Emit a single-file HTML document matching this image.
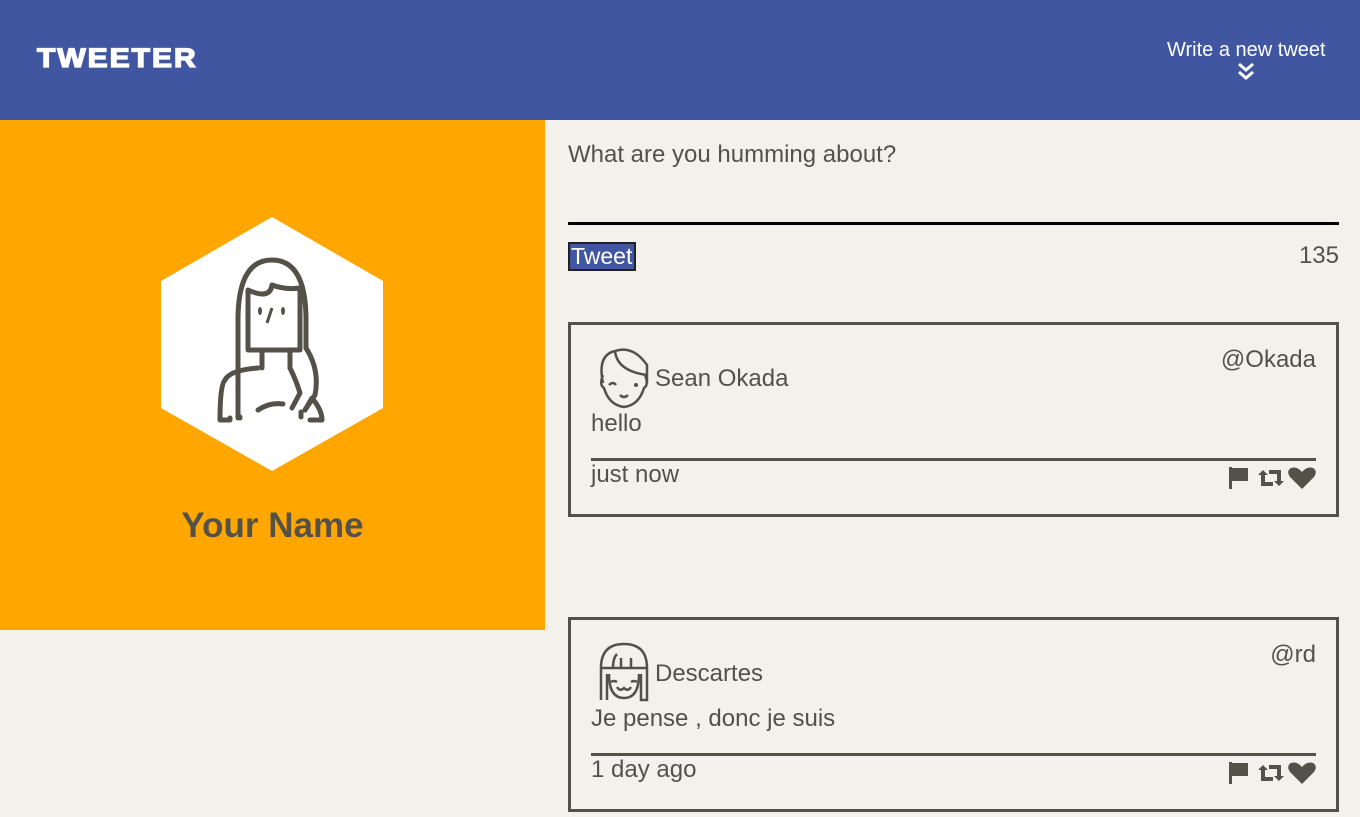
<!DOCTYPE html>
<html><head><style>
*{margin:0;padding:0;box-sizing:border-box}
body{width:1360px;height:817px;overflow:hidden;background:#f4f1ec;font-family:"Liberation Sans",sans-serif;color:#545149;position:relative}
.hdr{position:absolute;left:0;top:0;width:1360px;height:120px;background:#4056a1}
.logo{position:absolute;left:37px;top:42px;color:#fff;font-weight:900;font-size:30px;letter-spacing:2px;-webkit-text-stroke:1.5px #fff;transform:scaleY(.9)}
.wr{position:absolute;left:1167px;top:39px;color:#fff;font-size:20px}
.prof{position:absolute;left:0;top:120px;width:545px;height:510px;background:#ffa700}
.name{position:absolute;left:0;width:545px;top:386px;text-align:center;font-weight:bold;font-size:35px}
.abs{position:absolute}
.box{position:absolute;left:568px;width:771px;height:195px;border:3px solid #545149}
.box .n{position:absolute;left:84px;font-size:24px}
.box .h{position:absolute;right:20px;font-size:24px}
.box .t{position:absolute;left:20px;font-size:24px}
.box .l{position:absolute;left:20px;right:20px;height:3px;background:#545149}
</style></head><body>
<div class="hdr"><div class="logo">TWEETER</div><div class="wr">Write a new tweet</div>
<svg class="abs" style="left:1236px;top:62px" width="20" height="20" viewBox="0 0 20 20"><path d="M3 2l7 6 7-6M3 10l7 6 7-6" fill="none" stroke="#fff" stroke-width="3"/></svg></div>
<div class="prof">
<svg class="abs" style="left:0;top:0" width="545" height="400">
<polygon points="272,97 383,161 383,288 272,351 161,288 161,161" fill="#fff"/>
<g fill="none" stroke="#545149" stroke-width="5" stroke-linejoin="round" stroke-linecap="round">
<path d="M238,298 V200 Q238,140 272,140 Q306,140 306,200 V228 Q320,250 315,275 L305,290"/>
<path d="M248,170 Q270,180 272,165 Q285,170 300,168 V230 H248 Z"/>
<path d="M262,230 V248 M290,230 V248"/>
<path d="M290,248 Q296,260 300,273 L292,288 M258,248 Q230,250 225,260 Q220,265 220,300 H230 V298 M305,290 L312,278 Q322,290 322,300 H310"/>
<path d="M240,298 V297 M258,290 Q270,282 283,284 M301,292 V297"/>
</g>
<ellipse cx="260" cy="191" rx="2" ry="4" fill="#545149"/><ellipse cx="283" cy="191" rx="2" ry="4" fill="#545149"/>
<path d="M272,188 L267,203" stroke="#545149" stroke-width="3"/>
</svg>
<div class="name">Your Name</div></div>
<div class="abs" style="left:568px;top:141px;font-size:24px">What are you humming about?</div>
<div class="abs" style="left:568px;top:222px;width:771px;height:3px;background:#000"></div>
<div class="abs" style="left:568px;top:242px;width:68px;height:29px;background:#4056a1;border:2px solid #222;color:#fff;font-size:23px;line-height:25px;padding-left:1px">Tweet</div>
<div class="abs" style="right:21px;top:242px;font-size:24px">135</div>
<div class="box" style="top:322px">
<svg class="abs" style="left:24px;top:20px" width="58" height="66" viewBox="0 0 58 66"><g fill="none" stroke="#545149" stroke-width="2.5"><path d="M8,38 Q2,10 20,6 Q38,0 52,20 V38"/><path d="M20,6 Q22,26 52,30"/><path d="M8,30 Q4,40 9,43 Q14,60 29,62 Q44,60 49,43 Q54,40 50,30"/><path d="M14,40 Q18,36 21,40 M25,50 Q29,54 33,50"/></g><circle cx="41" cy="40" r="2" fill="#545149"/></svg>
<div class="n" style="top:40px">Sean Okada</div><div class="h" style="top:21px">@Okada</div>
<div class="t" style="top:85px">hello</div><div class="l" style="top:133px"></div>
<div class="t" style="top:136px">just now</div>
<svg class="abs" style="right:18px;top:140px" width="92" height="26" viewBox="0 0 92 26"><g fill="#545149"><path d="M3,2h3v22h-3z M6,3h16v13h-16z"/><path d="M32,10 l5-5 5,5h-3v7h8v4h-12v-11z M58,16 l-5,5 -5-5h3v-7h-8v-4h12v11z"/><path d="M76,24 L64,12 Q60,6 65,3 Q71,1 76,7 Q81,1 87,3 Q92,6 88,12z"/></g></svg>
</div>
<div class="box" style="top:617px">
<svg class="abs" style="left:24px;top:20px" width="58" height="64" viewBox="0 0 58 64"><g fill="none" stroke="#545149" stroke-width="2.5"><path d="M6,60 V28 Q6,4 29,4 Q52,4 52,28 V60 H46 V34 M12,60 V34 M6,28 H52"/><path d="M14,34 Q14,58 29,58 Q44,58 44,34"/><path d="M18,28 Q18,18 22,14 M26,28 V18 M36,28 V18"/><path d="M16,42 Q19,40 22,42 M36,42 Q39,40 42,42 M22,47 Q25,52 29,48 Q33,52 36,47"/></g></svg>
<div class="n" style="top:40px">Descartes</div><div class="h" style="top:21px">@rd</div>
<div class="t" style="top:85px">Je pense , donc je suis</div><div class="l" style="top:133px"></div>
<div class="t" style="top:136px">1 day ago</div>
<svg class="abs" style="right:18px;top:140px" width="92" height="26" viewBox="0 0 92 26"><g fill="#545149"><path d="M3,2h3v22h-3z M6,3h16v13h-16z"/><path d="M32,10 l5-5 5,5h-3v7h8v4h-12v-11z M58,16 l-5,5 -5-5h3v-7h-8v-4h12v11z"/><path d="M76,24 L64,12 Q60,6 65,3 Q71,1 76,7 Q81,1 87,3 Q92,6 88,12z"/></g></svg>
</div>
</body></html>
